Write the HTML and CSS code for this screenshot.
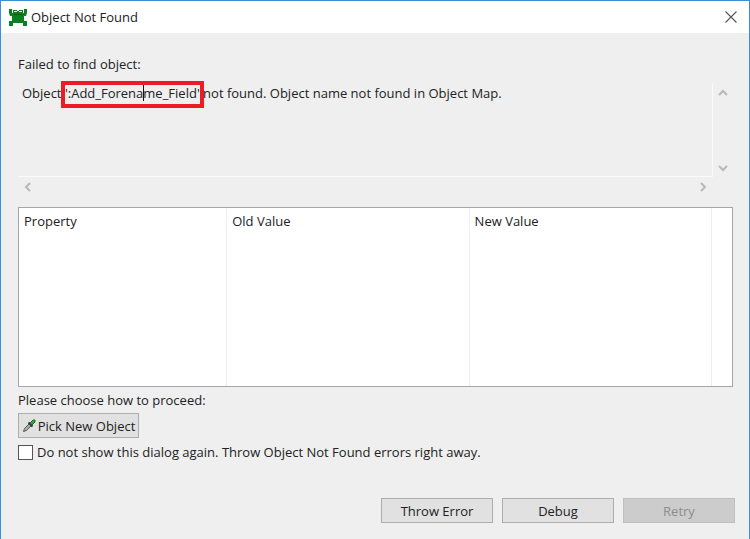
FILE: index.html
```html
<!DOCTYPE html>
<html lang="en">
<head>
<meta charset="utf-8">
<title>Object Not Found</title>
<link rel="stylesheet" href="styles.css">
</head>
<body>
<main class="dialog">
  <header class="titlebar">
    <svg class="logo" viewBox="0 0 18 17" aria-hidden="true">
      <path fill="#0b8020" d="M0 0h3v4h1V1h4v1h2V1h4v3h1V0h3v4l-1 3h-2v5h3v5h-4v-3H4v3H0v-5h3V7H1L0 4z"/>
      <path fill="#e8f3e8" d="M5 2h3v1H5zM10 2h3v1h-3z"/>
      <path fill="#075c11" d="M5 5h8v1H5z"/>
    </svg>
    <h1 class="title">Object Not Found</h1>
    <button class="close" type="button" aria-label="Close">
      <svg class="close-icon" viewBox="0 0 12 12" aria-hidden="true"><path d="M.5.5l11 11M11.5.5l-11 11" fill="none" stroke="#555" stroke-width="1.1"/></svg>
    </button>
  </header>
  <div class="content">
    <p class="label">Failed to find object:</p>
    <section class="message">
      <p class="message-text">Object <span class="name">':Add_Forena<span class="caret"></span>me_Field'</span> not found. Object name not found in Object Map.</p>
      <div class="scroll scroll-y">
        <svg class="arrow" viewBox="0 0 10 10" aria-hidden="true"><path d="M1 7l4-4 4 4"/></svg>
        <svg class="arrow" viewBox="0 0 10 10" aria-hidden="true"><path d="M1 3l4 4 4-4"/></svg>
      </div>
      <div class="scroll scroll-x">
        <svg class="arrow" viewBox="0 0 10 10" aria-hidden="true"><path d="M7 1L3 5l4 4"/></svg>
        <svg class="arrow" viewBox="0 0 10 10" aria-hidden="true"><path d="M3 1l4 4-4 4"/></svg>
      </div>
    </section>
    <table class="properties">
      <colgroup><col class="col-name"><col class="col-value"><col class="col-value"><col></colgroup>
      <thead><tr><th>Property</th><th>Old Value</th><th>New Value</th><td></td></tr></thead>
      <tbody><tr><td></td><td></td><td></td><td></td></tr></tbody>
    </table>
    <p class="label proceed">Please choose how to proceed:</p>
    <button class="button pick" type="button">
      <svg class="pipette" viewBox="0 0 14 14" aria-hidden="true">
        <path d="M1.500 12.500l1-3 5-5 2 2-5 5z" fill="#a9ada9" stroke="#555" stroke-width="1"/>
        <path d="M6.500 3.500l4 4" stroke="#333" stroke-width="2"/>
        <path d="M8 4l3-3h2v2l-3 3z" fill="#22b32e" stroke="#236b2b" stroke-width="1"/>
      </svg>
      Pick New Object
    </button>
    <label class="check"><input class="box" type="checkbox">Do not show this dialog again. Throw Object Not Found errors right away.</label>
    <footer class="actions">
      <button class="button" type="button">Throw Error</button>
      <button class="button" type="button">Debug</button>
      <button class="button" type="button" disabled>Retry</button>
    </footer>
  </div>
</main>
</body>
</html>
```
FILE: styles.css
```css
* { box-sizing: border-box; }

body {
  margin: 0;
  background: #efefef;
  color: #222;
  font: 13px/20px "Open Sans", "Noto Sans", sans-serif;
}

.dialog {
  display: flex;
  flex-direction: column;
  min-height: 100vh;
  border: 1px solid #3a8fd6;
  border-bottom: 0;
}

.titlebar {
  display: flex;
  align-items: center;
  height: 32px;
  padding: 0 12px 0 8px;
  background: #fff;
}

.logo { width: 18px; height: 17px; }
.title { flex: 1; margin: 0 0 0 4px; font-size: 13px; font-weight: 400; }

.close {
  display: flex;
  padding: 0;
  border: 0;
  background: none;
}
.close-icon { width: 12px; height: 12px; }

.content {
  display: flex;
  flex: 1;
  flex-direction: column;
  padding: 21px 16px 16px 17px;
}

.label { margin: 0; }

.message {
  display: grid;
  grid-template-columns: 1fr 20px;
  grid-template-rows: 94px 20px;
  margin-top: 9px;
}
.message-text {
  margin: 0;
  padding: 0 4px;
  border: solid #fafafa;
  border-width: 0 1px 1px 0;
  white-space: nowrap;
}

.name { position: relative; }
.name::after {
  content: "";
  position: absolute;
  inset: -3px -4px -6px -4px;
  border: 4px solid #ec1c24;
}
.caret {
  position: absolute;
  width: 1px;
  height: 18px;
  background: #111;
}

.scroll { display: flex; justify-content: space-between; }
.scroll-y { flex-direction: column; align-items: center; padding: 5px 0 4px; }
.scroll-x { align-items: center; padding: 0 5px; }
.arrow {
  width: 10px;
  height: 10px;
  fill: none;
  stroke: #b8b8b8;
  stroke-width: 2;
}

.properties {
  width: 100%;
  height: 180px;
  margin-top: 10px;
  border: 1px solid #a5a5ad;
  border-spacing: 0;
  background: #fff;
  table-layout: fixed;
}
.col-name { width: 29.2%; }
.col-value { width: 34%; }
.properties th,
.properties td { padding: 0 5px; border-right: 1px solid #e9eff5; }
.properties th { font-weight: 400; text-align: left; }
.properties thead { height: 26px; }
.properties tr > :last-child { border-right: 0; }

.proceed { margin-top: 3px; }

.button {
  width: 112px;
  height: 25px;
  padding: 0;
  border: 1px solid #adadad;
  background: #e1e1e1;
  color: #222;
  font: inherit;
}
.button:disabled { border-color: #bfbfbf; background: #ccc; color: #8c8c8c; }

.pick {
  display: flex;
  align-items: center;
  justify-content: center;
  gap: 2px;
  width: 121px;
  margin-top: 3px;
}
.pipette { width: 14px; height: 14px; }

.check { display: flex; align-items: center; gap: 4px; margin-top: 4px; }
.box {
  width: 15px;
  height: 15px;
  margin: 0;
  border: 1px solid #555;
  background: #fff;
  appearance: none;
}
.box:checked { background: #3a8fd6; }

.actions { display: flex; justify-content: flex-end; gap: 9px; margin: auto -2px 0 0; }
```
